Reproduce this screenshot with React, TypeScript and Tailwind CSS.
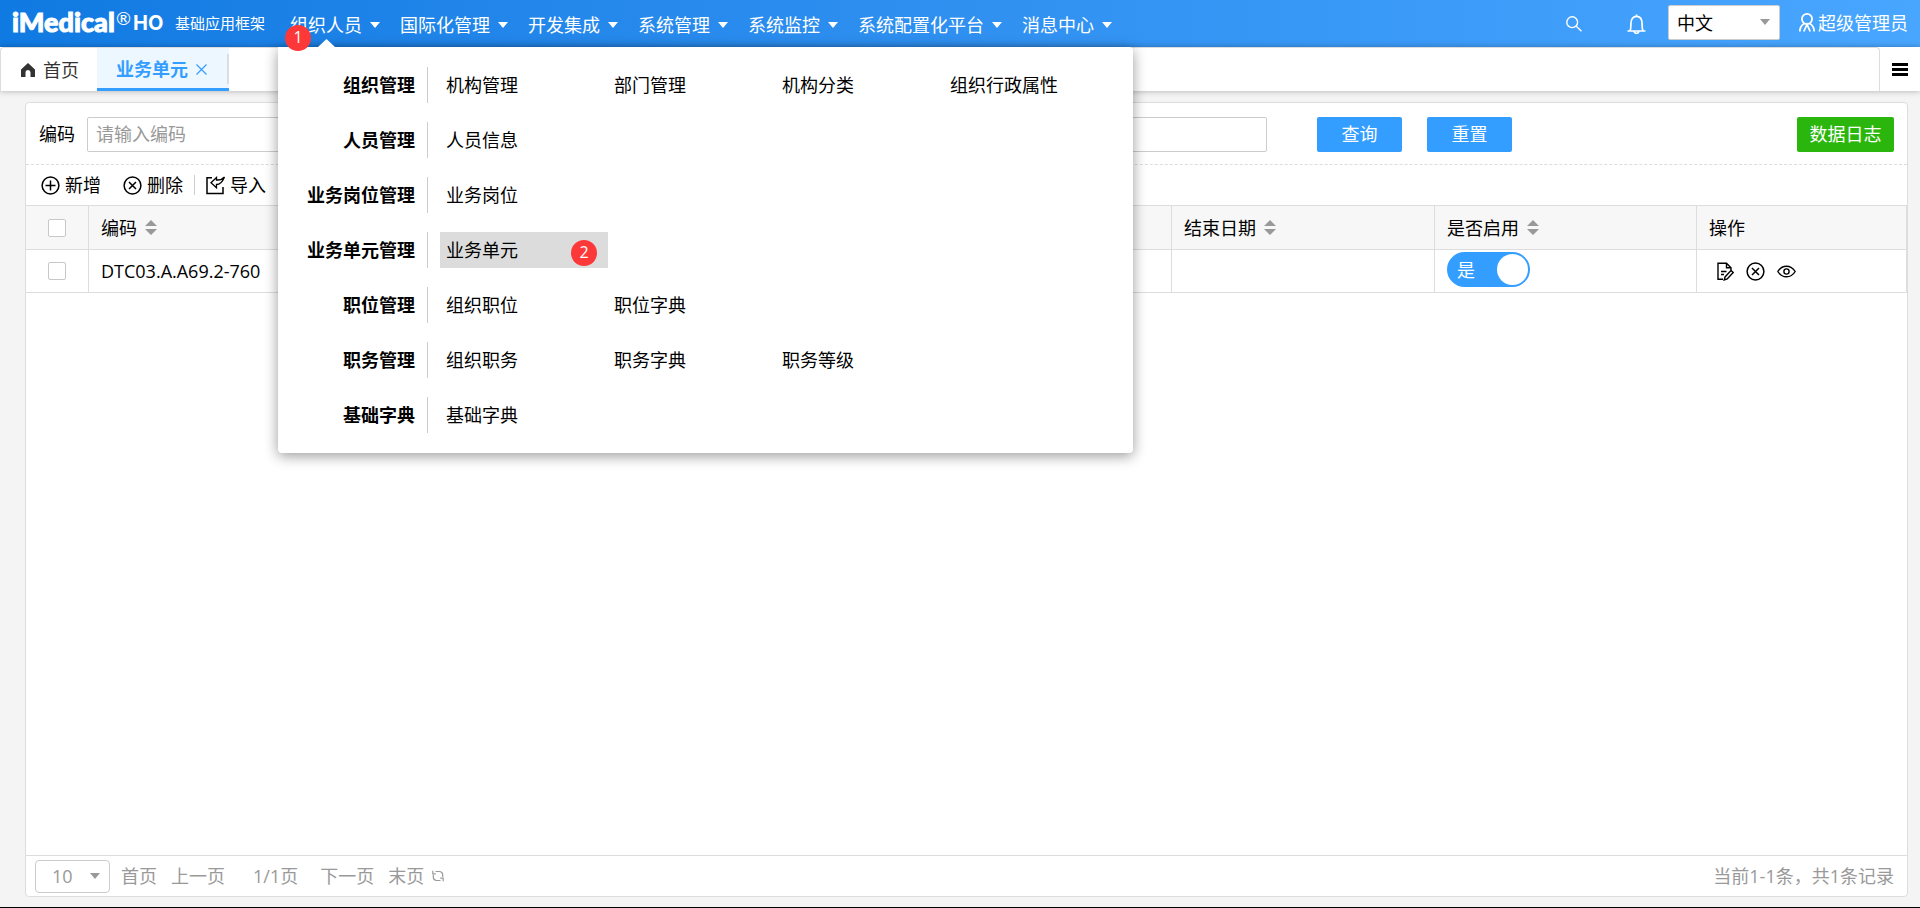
import React from "react";

const NAV = ["国际化管理", "开发集成", "系统管理", "系统监控", "系统配置化平台", "消息中心"];

const GROUPS = [
  { title: "组织管理", items: ["机构管理", "部门管理", "机构分类", "组织行政属性"] },
  { title: "人员管理", items: ["人员信息"] },
  { title: "业务岗位管理", items: ["业务岗位"] },
  { title: "业务单元管理", items: ["业务单元"] },
  { title: "职位管理", items: ["组织职位", "职位字典"] },
  { title: "职务管理", items: ["组织职务", "职务字典", "职务等级"] },
  { title: "基础字典", items: ["基础字典"] },
];

function Caret({ className = "" }: { className?: string }) {
  return (
    <svg className={"h-[6px] w-[10px] shrink-0 " + className} viewBox="0 0 10 6" fill="currentColor">
      <path d="M0 0h10L5 6z" />
    </svg>
  );
}

function Badge({ n, className }: { n: number; className: string }) {
  return (
    <span
      className={
        "absolute flex size-[26px] items-center justify-center rounded-full bg-[#fd3838] pb-[3px] text-base leading-none text-white " +
        className
      }
    >
      {n}
    </span>
  );
}

function CircleX() {
  return (
    <svg className="size-[19px]" viewBox="0 0 19 19" fill="none" stroke="currentColor" strokeWidth="1.5">
      <circle cx="9.5" cy="9.5" r="8.4" />
      <path d="M6 6l7 7M13 6l-7 7" />
    </svg>
  );
}

function SortIcon() {
  return (
    <svg className="h-[15px] w-[12px] text-[#999]" viewBox="0 0 12 15" fill="currentColor">
      <path d="M6 0l6 6H0zM0 9h12l-6 6z" />
    </svg>
  );
}

function Check({ label }: { label: string }) {
  return (
    <input
      type="checkbox"
      aria-label={label}
      className="mx-auto block size-[18px] appearance-none rounded-xs border border-[#c8c8c8] bg-white"
    />
  );
}

function Header() {
  return (
    <header className="flex h-[47px] shrink-0 items-center bg-linear-to-r from-[#0f7ae2] to-[#48a6ff] text-white">
      <div className="flex shrink-0 items-center pl-3">
        <span className="flex h-7 w-[102px] items-center pb-[3px] font-[Lato] text-[27px] leading-7 font-black [-webkit-text-stroke:1px_white]">iMedical</span>
        <span className="ml-[2px] pb-3 font-[Lato] text-lg leading-none">®</span>
        <span className="ml-[2px] w-[30px] pb-[2px] font-[Inter] text-[20px] leading-7 font-bold">HO</span>
        <span className="ml-3 pb-[2px] text-[15px] leading-6">基础应用框架</span>
      </div>
      <nav className="ml-[25px] flex items-center gap-5 pt-[3px] leading-6">
        <div className="relative">
          <button className="flex items-center gap-2 whitespace-nowrap">
            组织人员
            <Caret />
          </button>
          <Badge n={1} className="top-[12px] left-[-5px] z-30" />
          <MegaMenu />
        </div>
        {NAV.map((t) => (
          <button key={t} className="flex items-center gap-2 whitespace-nowrap">
            {t}
            <Caret />
          </button>
        ))}
      </nav>
      <div className="ml-auto flex shrink-0 items-center pr-3">
        <button aria-label="搜索">
          <svg className="size-4" viewBox="0 0 16 16" fill="none" stroke="currentColor" strokeWidth="1.4">
            <circle cx="6.2" cy="6.2" r="5.4" />
            <path d="M10 10l5.5 5.2" />
          </svg>
        </button>
        <button aria-label="通知" className="ml-[45px]">
          <svg className="h-5 w-[19px]" viewBox="0 0 19 20" fill="none" stroke="currentColor" strokeWidth="1.7">
            <path d="M.5 17h18M3 16.800c1-1.800.9-3.500.9-7C3.900 5 6.200 2.300 9.500 2.300S15.100 5 15.100 9.800c0 3.500-.1 5.200.9 7M9.500 2.500V.4M7.200 17.600c.4 2.200 4.200 2.200 4.600 0" />
          </svg>
        </button>
        <div className="relative mb-[2px] ml-[22px]">
          <select aria-label="语言" className="block h-[35px] w-[112px] appearance-none rounded-xs border border-[#ccc] bg-white pl-2 text-black">
            <option>中文</option>
          </select>
          <Caret className="pointer-events-none absolute top-[14px] right-[10px] text-[#999]" />
        </div>
        <a href="#user" className="mb-[2px] ml-[19px] flex items-center gap-[3px] leading-6">
          <svg className="h-[19px] w-4" viewBox="0 0 16 19" fill="none" stroke="currentColor" strokeWidth="1.8">
            <circle cx="8" cy="6" r="5.100" />
            <path d="M.8 18.500c.2-4.500 2-6.800 4.700-8M15.200 18.500c-.2-4.500-2-6.800-4.700-8M4.800 18.500L8 11.500l3.200 7" />
          </svg>
          超级管理员
        </a>
      </div>
    </header>
  );
}

function MegaMenu() {
  return (
    <div className="absolute top-[34px] left-[-12px] z-20 w-[855px] rounded-b rounded-tr bg-white py-5 text-black shadow-[0_3px_14px_rgba(0,0,0,0.4)]">
      <svg className="absolute top-[-8px] left-10 h-2 w-[17px]" viewBox="0 0 17 8" fill="white">
        <path d="M0 8L8.500 0 17 8z" />
      </svg>
      <div className="flex flex-col gap-[19px]">
        {GROUPS.map((g) => (
          <div key={g.title} className="flex h-9 items-center">
            <span className="w-[137px] text-right font-bold">{g.title}</span>
            <span className="mr-3 ml-3 h-full w-px bg-[#ccc]" />
            {g.items.map((t) => (
              <a
                key={t}
                href="#menu"
                className={"relative flex h-full w-[168px] items-center pl-[6px] " + (t === "业务单元" ? "bg-[#dcdcdc]" : "")}
              >
                {t}
                {t === "业务单元" && <Badge n={2} className="top-2 right-[11px]" />}
              </a>
            ))}
          </div>
        ))}
      </div>
    </div>
  );
}

function TabBar() {
  return (
    <div className="flex h-[44px] shrink-0 bg-white shadow-[0_0_6px_rgba(0,0,0,0.3)]">
      <div className="flex flex-1 rounded-t border border-b-0 border-[#ddd]">
        <a href="#home" className="flex w-24 items-center gap-2 pl-[20px] text-[#333]">
          <svg className="size-[14px]" viewBox="0 0 14 14" fill="currentColor">
            <path d="M7 0L0 6.500V14h4.500V9.500a2.500 2.500 0 015 0V14H14V6.500z" />
          </svg>
          首页
        </a>
        <div className="relative flex w-[132px] items-center border-b-3 border-[#339eff] bg-[#ecf7ff] pt-[2px] pl-[19px] font-bold text-[#339eff]">
          <span>业务单元</span>
          <button aria-label="关闭" className="ml-2">
            <svg className="size-[11px]" viewBox="0 0 11 11" fill="none" stroke="currentColor" strokeWidth="1.200">
              <path d="M.5.5l10 10M10.500.5l-10 10" />
            </svg>
          </button>
          <span className="absolute top-[6px] right-0 h-[30px] w-[2px] bg-[#ddd]" />
        </div>
      </div>
      <button aria-label="标签菜单" className="flex w-10 items-center justify-center">
        <svg className="h-[13px] w-4" viewBox="0 0 16 13" fill="black">
          <path d="M0 0h16v3H0zM0 5h16v3H0zM0 10h16v3H0z" />
        </svg>
      </button>
    </div>
  );
}

function Toolbar() {
  return (
    <div className="flex h-[40px] items-center pl-[15px]">
      <button className="flex items-center gap-[5px]">
        <svg className="size-[19px]" viewBox="0 0 19 19" fill="none" stroke="currentColor" strokeWidth="1.500">
          <circle cx="9.500" cy="9.500" r="8.400" />
          <path d="M9.500 4.500v10M4.500 9.500h10" />
        </svg>
        新增
      </button>
      <button className="ml-[22px] flex items-center gap-[5px]">
        <CircleX />
        删除
      </button>
      <span className="mx-[11px] h-5 w-px bg-[#ccc]" />
      <button className="flex items-center gap-[5px]">
        <svg className="size-[19px]" viewBox="0 0 19 19" fill="none" stroke="currentColor" strokeWidth="1.500">
          <path d="M6 1.800H1v15.700h16V11" />
          <path d="M18.500 1C15.500 4.500 13.500 4 10.500 4V1.500L5 6.800l5.500 5V8.500c3.500 0 6-2.500 8-7.500z" strokeWidth="1.300" />
        </svg>
        导入
      </button>
    </div>
  );
}

function DataTable() {
  const cell = "border-r border-b border-[#ddd] px-3 text-left font-normal";
  return (
    <table className="w-full table-fixed border-separate border-spacing-0 border-t border-[#ddd]">
      <colgroup>
        <col className="w-[63px]" />
        <col />
        <col className="w-[263px]" />
        <col className="w-[262px]" />
        <col className="w-[210px]" />
      </colgroup>
      <thead>
        <tr className="h-[44px] bg-[#f7f7f7]">
          <th className={cell}><Check label="全选" /></th>
          {["编码", "结束日期", "是否启用"].map((t) => (
            <th key={t} className={cell}>
              <span className="flex items-center gap-2">{t}<SortIcon /></span>
            </th>
          ))}
          <th className={cell}>操作</th>
        </tr>
      </thead>
      <tbody>
        <tr className="h-[43px]">
          <td className={cell}><Check label="选择行" /></td>
          <td className={cell}>DTC03.A.A69.2-760</td>
          <td className={cell} />
          <td className={cell}>
            <button role="switch" aria-checked="true" className="mb-[3px] flex h-[35px] w-[83px] items-center justify-between rounded-full bg-[#339eff] pr-[2px] pl-[10px] text-white">
              是
              <span className="size-[31px] rounded-full bg-white" />
            </button>
          </td>
          <td className={cell}>
            <div className="flex items-center gap-3 pl-[8px]">
              <button aria-label="编辑">
                <svg className="h-[19px] w-[17px]" viewBox="0 0 17 19" fill="none" stroke="currentColor" strokeWidth="1.400">
                  <path d="M6 17.300H1V1.200h8.500L14 5.700V8M9.500 1.200v4.500H14M4 9.500h5.500M4 12.500h3" />
                  <path d="M8 15l6-6.500 2.200 2L10.200 17l-3 1z" />
                </svg>
              </button>
              <button aria-label="删除"><CircleX /></button>
              <button aria-label="查看">
                <svg className="h-[13px] w-[19px]" viewBox="0 0 19 13" fill="none" stroke="currentColor" strokeWidth="1.400">
                  <path d="M.8 6.500C3 3 6 1.200 9.500 1.200S16 3 18.200 6.500C16 10 13 11.800 9.500 11.800S3 10 .8 6.500z" />
                  <circle cx="9.500" cy="6.500" r="2.600" />
                </svg>
              </button>
            </div>
          </td>
        </tr>
      </tbody>
    </table>
  );
}

function Pager() {
  return (
    <footer className="flex h-[41px] items-center border-t border-[#ddd] px-[9px] text-[#999]">
      <div className="relative">
        <select aria-label="每页条数" className="block h-[33px] w-[75px] appearance-none rounded border border-[#ccc] pl-4">
          <option>10</option>
        </select>
        <Caret className="pointer-events-none absolute top-[13px] right-[10px]" />
      </div>
      <button className="ml-[11px]">首页</button>
      <button className="ml-[14px]">上一页</button>
      <span className="ml-7">1/1页</span>
      <button className="ml-[22px]">下一页</button>
      <button className="ml-[14px]">末页</button>
      <button aria-label="刷新" className="ml-2">
        <svg className="size-3" viewBox="0 0 12 12" fill="none" stroke="currentColor" strokeWidth="1.200">
          <path d="M3.500 1.500h3.800a3.400 3.400 0 013.400 3.400V7M8.500 10.500H4.700a3.400 3.400 0 01-3.400-3.400V5" />
          <path d="M.8.8v3h3M11.200 11.200v-3h-3" />
        </svg>
      </button>
      <span className="ml-auto pr-1">当前1-1条，共1条记录</span>
    </footer>
  );
}

export default function App() {
  return (
    <div className="flex min-h-screen flex-col border-b border-black bg-[#f4f4f4] font-['Open_Sans','Noto_Sans_CJK_SC',sans-serif] text-[18px] leading-6 text-black">
      <Header />
      <TabBar />
      <main className="mt-[11px] mr-3 mb-[10px] ml-[25px] flex flex-1 flex-col rounded border border-[#ddd] bg-white">
        <form className="flex h-[62px] items-center border-b border-dashed border-[#ddd] px-[13px] pt-px">
          <div className="flex w-[1228px] min-w-0 items-center">
            <label htmlFor="code" className="shrink-0">编码</label>
            <input id="code" placeholder="请输入编码" className="ml-3 h-[35px] min-w-0 flex-1 rounded-xs border border-[#ccc] px-2 placeholder:text-[#999]" />
            <input aria-label="名称" className="ml-12 h-[35px] min-w-0 flex-1 rounded-xs border border-[#ccc] px-2" />
          </div>
          <button type="button" className="ml-[50px] h-[35px] w-[85px] shrink-0 rounded-xs bg-[#339eff] text-white">查询</button>
          <button type="button" className="ml-[25px] h-[35px] w-[85px] shrink-0 rounded-xs bg-[#339eff] text-white">重置</button>
          <button type="button" className="ml-auto h-[35px] w-[97px] shrink-0 rounded-xs bg-[#2ab60c] text-white">数据日志</button>
        </form>
        <Toolbar />
        <div className="flex-1">
          <DataTable />
        </div>
        <Pager />
      </main>
    </div>
  );
}
